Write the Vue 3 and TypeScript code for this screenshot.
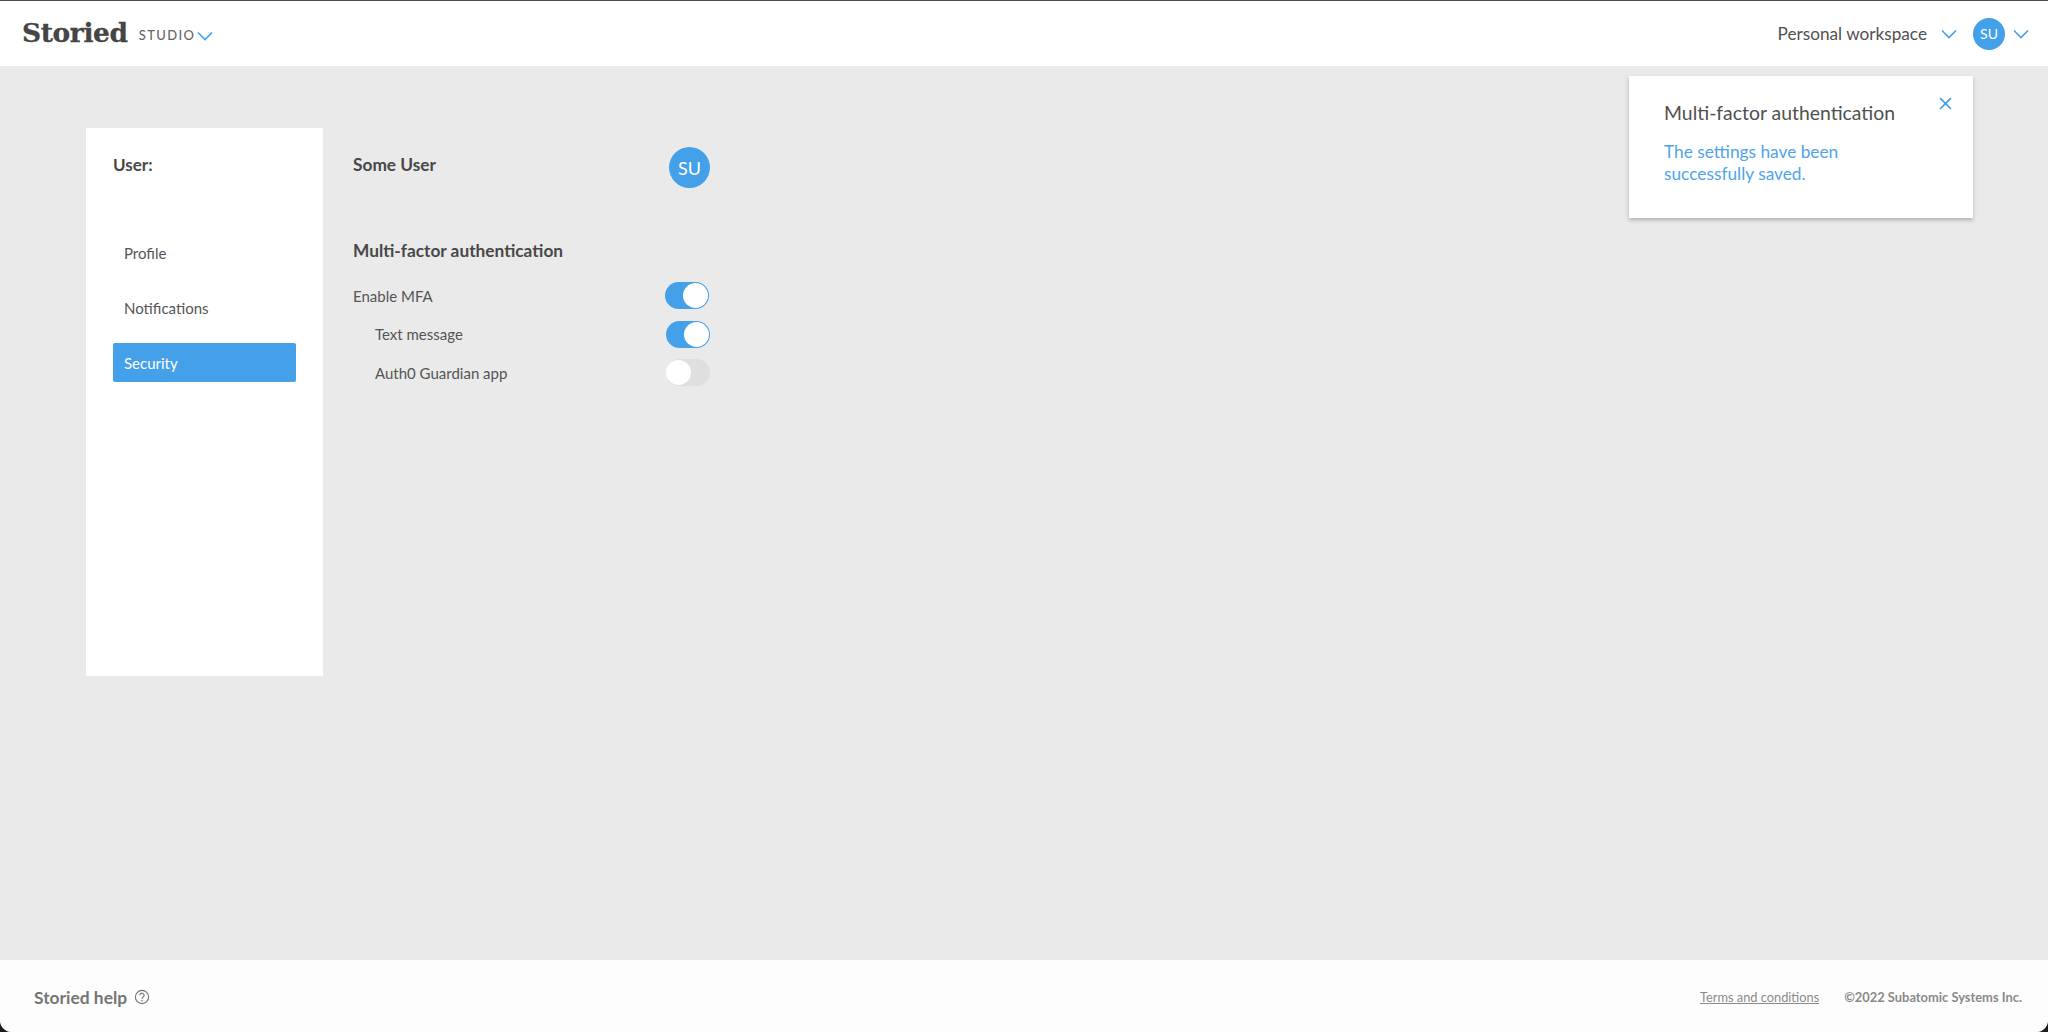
<script setup lang="ts">
const menu = [
  { label: 'Profile', active: false },
  { label: 'Notifications', active: false },
  { label: 'Security', active: true },
]
const toggles = [
  { label: 'Enable MFA', on: true, sub: false },
  { label: 'Text message', on: true, sub: true },
  { label: 'Auth0 Guardian app', on: false, sub: true },
]
</script>

<template>
  <div class="page">
    <header class="top">
      <div class="brand">
        <span class="logo">Storied</span>
        <span class="studio">STUDIO</span>
        <svg class="chev chev-brand" viewBox="0 0 16 10"><path d="M1 1.5 8 8.5 15 1.5" /></svg>
      </div>
      <div class="account">
        <span class="workspace">Personal workspace</span>
        <svg class="chev chev-ws" viewBox="0 0 16 10"><path d="M1 1.5 8 8.5 15 1.5" /></svg>
        <span class="avatar avatar-small">SU</span>
        <svg class="chev chev-user" viewBox="0 0 16 10"><path d="M1 1.5 8 8.5 15 1.5" /></svg>
      </div>
    </header>

    <main class="main">
      <aside class="side">
        <h2 class="side-title">User:</h2>
        <nav class="menu">
          <a v-for="m in menu" :key="m.label" class="item" :class="{ active: m.active }">{{ m.label }}</a>
        </nav>
      </aside>
      <section class="content">
        <div class="user-row">
          <span class="user-name">Some User</span>
          <span class="avatar avatar-large">SU</span>
        </div>
        <h3 class="mfa-title">Multi-factor authentication</h3>
        <div class="rows">
          <div v-for="t in toggles" :key="t.label" class="row" :class="{ sub: t.sub }">
            <span>{{ t.label }}</span>
            <span class="toggle" :class="{ on: t.on }"><i class="knob"></i></span>
          </div>
        </div>
      </section>
      <div class="toast">
        <div class="toast-title">Multi-factor authentication</div>
        <div class="toast-body">The settings have been<br />successfully saved.</div>
        <svg class="toast-close" viewBox="0 0 12 12"><path d="M1 1 11 11M11 1 1 11" /></svg>
      </div>
    </main>

    <footer class="foot">
      <div class="help">
        <span>Storied help</span>
        <svg class="help-icon" viewBox="0 0 16 16">
          <circle cx="8" cy="8" r="6.6" />
          <path d="M5.9 6.3a2.1 2.1 0 1 1 3.3 1.7c-.8.5-1.2.9-1.2 1.8" />
          <circle class="dot" cx="8" cy="11.8" r=".8" />
        </svg>
      </div>
      <div class="legal">
        <a class="terms">Terms and conditions</a>
        <span class="copy">©2022 Subatomic Systems Inc.</span>
      </div>
    </footer>
  </div>
</template>

<style>
html, body { margin: 0; background: #1c1c1c; }
</style>

<style scoped>
.page {
  height: 1032px;
  display: flex;
  flex-direction: column;
  font-family: Lato, "Open Sans", sans-serif;
  color: #444;
  background: #eaeaea;
  border-radius: 0 0 12px 12px;
  overflow: hidden;
}
.top {
  height: 65px;
  flex: none;
  border-top: 1px solid #4a4a4a;
  background: #fff;
  display: flex;
  align-items: center;
  justify-content: space-between;
  padding: 0 19px 0 22px;
}
.brand { display: flex; align-items: center; }
.logo {
  font-family: "DejaVu Serif", serif;
  font-weight: 700;
  font-size: 26.5px;
  letter-spacing: -0.4px;
  color: #454545;
  line-height: 1;
  -webkit-text-stroke: 0.3px #454545;
}
.studio {
  margin-left: 11px;
  font-size: 13px;
  letter-spacing: 1.4px;
  font-weight: 500;
  color: #666;
  margin-top: 3px;
}
.chev { fill: none; stroke: #44a0e8; stroke-width: 1.6; }
.chev-brand { width: 16px; height: 10px; margin-left: 2px; margin-top: 4px; }
.account { display: flex; align-items: center; }
.workspace { font-size: 17.2px; color: #505050; }
.chev-ws { width: 16px; height: 10px; margin-left: 14px; }
.avatar {
  display: flex;
  align-items: center;
  justify-content: center;
  border-radius: 50%;
  background: #44a0e8;
  color: #fff;
}
.avatar-small { width: 32px; height: 32px; font-size: 14px; margin-left: 16px; }
.chev-user { width: 16px; height: 10px; margin-left: 8px; }

.main {
  position: relative;
  flex: 1;
  display: flex;
  align-items: flex-start;
  padding: 62px 0 0 86px;
}
.side {
  width: 237px;
  height: 548px;
  background: #fff;
  box-sizing: border-box;
  padding: 0 27px;
}
.side-title {
  margin: 26px 0 0;
  font-size: 17px;
  line-height: 22px;
  font-weight: 700;
  color: #484848;
}
.menu { display: flex; flex-direction: column; gap: 16px; margin-top: 57px; }
.item {
  height: 39px;
  display: flex;
  align-items: center;
  padding-left: 11px;
  font-size: 15px;
  color: #555;
  border-radius: 2px;
}
.item.active { background: #44a0e8; color: #fff; }
.content { width: 357px; margin-left: 30px; }
.user-row {
  display: flex;
  justify-content: space-between;
  align-items: flex-start;
  margin-top: 19px;
}
.user-name { font-size: 17.3px; font-weight: 700; line-height: 22px; margin-top: 7px; color: #484848; }
.avatar-large { width: 41px; height: 41px; font-size: 18px; }
.mfa-title {
  margin: 52px 0 0;
  font-size: 17.3px;
  line-height: 22px;
  font-weight: 700;
  color: #484848;
}
.rows { margin-top: 20px; display: flex; flex-direction: column; gap: 11.5px; }
.row {
  height: 27px;
  display: flex;
  align-items: center;
  justify-content: space-between;
  font-size: 15px;
  color: #555;
  padding-right: 1px;
}
.row.sub { padding-left: 22px; padding-right: 0; }
.toggle {
  width: 44px;
  height: 27px;
  box-sizing: border-box;
  border-radius: 14px;
  background: #dfdfdf;
  display: flex;
  align-items: center;
  justify-content: flex-start;
}
.toggle.on { background: #44a0e8; justify-content: flex-end; }
.knob {
  display: block;
  width: 25px;
  height: 25px;
  border-radius: 50%;
  background: #fff;
}
.toggle.on .knob { margin-right: 1px; }

.toast {
  position: absolute;
  left: 1629px;
  top: 10px;
  width: 344px;
  height: 142px;
  box-sizing: border-box;
  padding: 25px 35px;
  background: #fff;
  box-shadow: 0 2px 4px rgba(0, 0, 0, 0.25);
}
.toast-title { font-size: 19.4px; line-height: 24px; color: #505050; }
.toast-body { margin-top: 16px; font-size: 17.3px; line-height: 21.5px; color: #4fa5ea; }
.toast-close {
  position: absolute;
  top: 21px;
  right: 21px;
  width: 13px;
  height: 13px;
  fill: none;
  stroke: #44a0e8;
  stroke-width: 1.5;
}

.foot {
  height: 70px;
  padding: 2px 26px 0 34px;
  flex: none;
  background: #fdfdfd;
  display: flex;
  align-items: center;
  justify-content: space-between;
  color: #757575;
}
.help { display: flex; align-items: center; gap: 7px; font-size: 17.4px; font-weight: 700; }
.help-icon { width: 16px; height: 16px; fill: none; stroke: #757575; stroke-width: 1.1; }
.help-icon .dot { fill: #757575; stroke: none; }
.legal { display: flex; align-items: center; gap: 25px; font-size: 12.9px; color: #8a8a8a; }
.terms { text-decoration: underline; font-size: 12.8px; }
.copy { font-weight: 700; }
</style>
